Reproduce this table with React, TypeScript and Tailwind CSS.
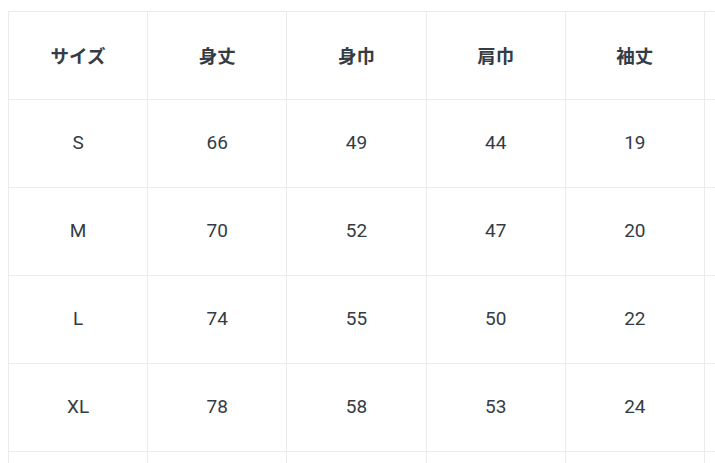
const headers = ['サイズ', '身丈', '身巾', '肩巾', '袖丈', '']

// last column and last row run past the edge of the frame, so they stay empty here
const rows = [
  ['S', '66', '49', '44', '19', ''],
  ['M', '70', '52', '47', '20', ''],
  ['L', '74', '55', '50', '22', ''],
  ['XL', '78', '58', '53', '24', ''],
  ['', '', '', '', '', ''],
]

export default function App() {
  return (
    <div className="w-[715px] h-[463px] overflow-hidden bg-white pl-[8px] pt-[11px]">
      <table
        className="border-collapse table-fixed text-[19px] text-[#343c45]"
        style={{ fontFamily: 'Roboto, "Noto Sans CJK JP", sans-serif' }}
      >
        <thead>
          <tr>
            {headers.map((h, i) => (
              <th
                key={i}
                className="w-[139.2px] min-w-[139.2px] h-[88px] border border-[#ebebeb] text-center align-middle font-bold text-[18.5px]"
                style={{ fontFamily: '"Noto Sans CJK JP", sans-serif' }}
              >
                {h}
              </th>
            ))}
          </tr>
        </thead>
        <tbody>
          {rows.map((r, ri) => (
            <tr key={ri}>
              {r.map((v, i) => (
                <td
                  key={i}
                  className="w-[139.2px] min-w-[139.2px] h-[88px] border border-[#ebebeb] text-center align-middle font-normal"
                >
                  {v}
                </td>
              ))}
            </tr>
          ))}
        </tbody>
      </table>
    </div>
  )
}
